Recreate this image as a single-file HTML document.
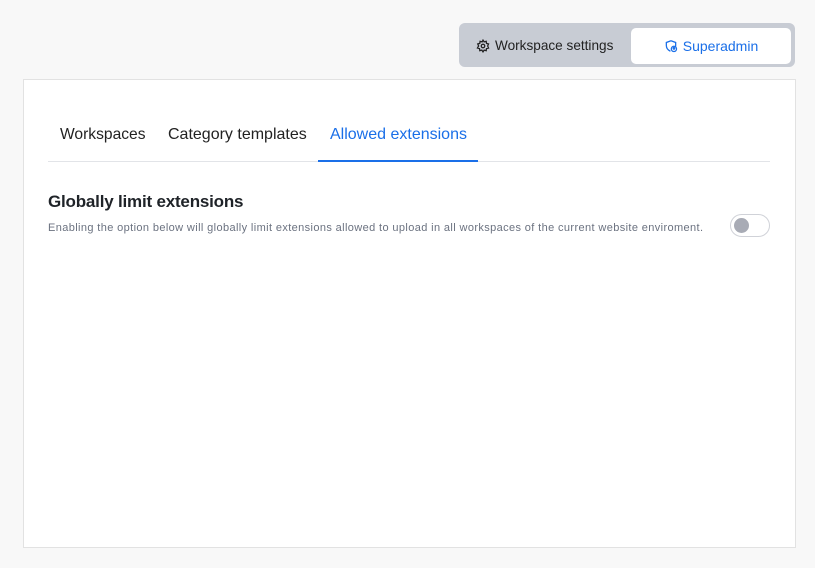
<!DOCTYPE html>
<html><head><style>
body{margin:0;width:815px;height:568px;background:#f8f8f8;font-family:"Liberation Sans",sans-serif;position:relative;overflow:hidden}
.seg{position:absolute;left:459px;top:23px;width:336px;height:44px;background:#c8ccd4;border-radius:6px}
.ws{position:absolute;left:476px;top:24px;height:44px;line-height:44px;font-size:13.6px;color:#222;display:flex;align-items:center;gap:5px}
.sa{position:absolute;left:631px;top:28px;width:160px;height:36px;background:#fff;border-radius:5px;display:flex;align-items:center;justify-content:center;gap:5px;font-size:14px;color:#1a6fe8}
.card{position:absolute;left:23px;top:79px;width:771px;height:467px;background:#fff;border:1px solid #e2e2e2}
.tab{position:absolute;top:126px;font-size:16px;color:#222}
.line{position:absolute;left:48px;top:161px;width:722px;height:1px;background:#e2e4e8}
.ul{position:absolute;left:318px;top:160px;width:160px;height:2px;background:#1a6fe8}
h2{position:absolute;left:48px;top:192px;margin:0;font-size:17px;font-weight:bold;color:#1f2328;letter-spacing:-0.2px}
.d{position:absolute;left:48px;top:222px;font-size:11px;color:#6b7280;letter-spacing:0.38px}
.tg{position:absolute;left:730px;top:214px;width:38px;height:21px;border:1px solid #d0d2d8;border-radius:12px;background:#fff}
.tg i{position:absolute;left:3px;top:3px;width:15px;height:15px;border-radius:50%;background:#a8abb5}
</style></head><body>
<div class="seg"></div>
<div class="ws"><svg width="14" height="14" viewBox="0 0 24 24" fill="none" stroke="#222" stroke-width="2.2"><circle cx="12" cy="12" r="3"/><path d="M12 2l2 3 3.5-1 .5 3.5 3.5 1-1.5 3.5 1.5 3.5-3.5 1-.5 3.5-3.5-1-2 3-2-3-3.5 1-.5-3.5-3.5-1L4.5 12 3 8.5l3.5-1L7 4l3.5 1z"/></svg>Workspace settings</div>
<div class="sa"><svg width="14" height="14" viewBox="0 0 24 24" fill="none" stroke="#1a6fe8" stroke-width="2.2"><path d="M12 3l8 3v5c0 1-0.2 2-0.5 3M12 3L4 6v5c0 5 3.5 8.5 7 10"/><circle cx="17" cy="17" r="4.5"/><circle cx="17" cy="16" r="1.3"/></svg>Superadmin</div>
<div class="card"></div>
<div class="tab" style="left:60px;font-size:15.6px">Workspaces</div>
<div class="tab" style="left:168px">Category templates</div>
<div class="tab" style="left:330px;color:#1a6fe8">Allowed extensions</div>
<div class="line"></div><div class="ul"></div>
<h2>Globally limit extensions</h2>
<div class="d">Enabling the option below will globally limit extensions allowed to upload in all workspaces of the current website enviroment.</div>
<div class="tg"><i></i></div>
</body></html>
